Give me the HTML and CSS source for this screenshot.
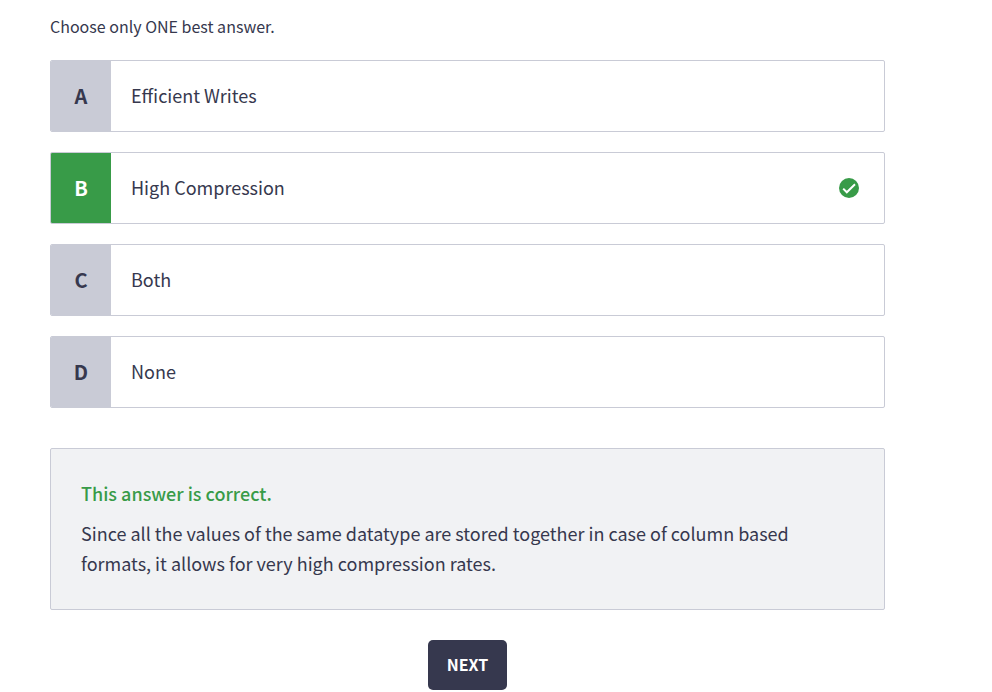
FILE: index.html
```html
<!DOCTYPE html>
<html lang="en">
<head>
<meta charset="utf-8">
<meta name="viewport" content="width=device-width, initial-scale=1">
<title>Quiz</title>
<link rel="stylesheet" href="styles.css">
</head>
<body>
<main class="quiz">
  <p class="hint">Choose only ONE best answer.</p>
  <div class="options">
    <button class="option" type="button">
      <span class="letter">A</span>
      <span class="answer">Efficient Writes</span>
    </button>
    <button class="option correct" type="button">
      <span class="letter">B</span>
      <span class="answer">High Compression</span>
      <svg class="check" viewBox="0 0 20 20" aria-hidden="true">
        <circle cx="10" cy="10" r="10" fill="#389b48"/>
        <path d="M4.2 10.6 7.8 14.3 16 6.2" fill="none" stroke="#fff" stroke-width="2"/>
      </svg>
    </button>
    <button class="option" type="button">
      <span class="letter">C</span>
      <span class="answer">Both</span>
    </button>
    <button class="option" type="button">
      <span class="letter">D</span>
      <span class="answer">None</span>
    </button>
  </div>
  <section class="feedback">
    <h2 class="verdict">This answer is correct.</h2>
    <p class="explanation">Since all the values of the same datatype are stored together in case of column based formats, it allows for very high compression rates.</p>
  </section>
  <button class="next" type="button">NEXT</button>
</main>
</body>
</html>
```

FILE: styles.css
```css
* {
  box-sizing: border-box;
}

body {
  margin: 0;
  background: #fff;
  color: #36384e;
  font-family: "Source Sans Pro", "Noto Sans CJK SC", sans-serif;
  font-size: 18px;
  line-height: 30px;
}

button {
  font: inherit;
  color: inherit;
  cursor: pointer;
}

.quiz {
  display: flex;
  flex-direction: column;
  padding: 11px 107px 0 50px;
}

.hint {
  margin: 0 0 19px;
  font-size: 16px;
}

.options {
  display: flex;
  flex-direction: column;
  gap: 20px;
}

.option {
  display: flex;
  align-items: center;
  height: 72px;
  padding: 0;
  overflow: hidden;
  text-align: left;
  background: #fff;
  border: 1px solid #c9cbd6;
  border-radius: 2px;
}

.letter {
  display: flex;
  flex: none;
  align-items: center;
  justify-content: center;
  align-self: stretch;
  width: 60px;
  background: #c9cbd6;
  font-size: 20px;
  font-weight: 700;
}

.correct .letter {
  background: #389b48;
  color: #fff;
}

.answer {
  flex: 1;
  padding: 0 20px 2px;
}

.check {
  flex: none;
  width: 20px;
  height: 20px;
  margin-right: 25px;
}

.feedback {
  margin-top: 40px;
  padding: 29px 30px 31px;
  background: #f1f2f4;
  border: 1px solid #c9cbd6;
  border-radius: 2px;
}

.verdict {
  margin: 0 0 10px;
  color: #389b48;
  font-size: 18px;
  font-weight: 500;
}

.explanation {
  margin: 0;
}

.next {
  align-self: center;
  height: 50px;
  margin-top: 30px;
  padding: 0 19px 2px;
  background: #36384e;
  border: 0;
  border-radius: 5px;
  color: #fff;
  font-size: 16px;
  font-weight: 700;
}
```
